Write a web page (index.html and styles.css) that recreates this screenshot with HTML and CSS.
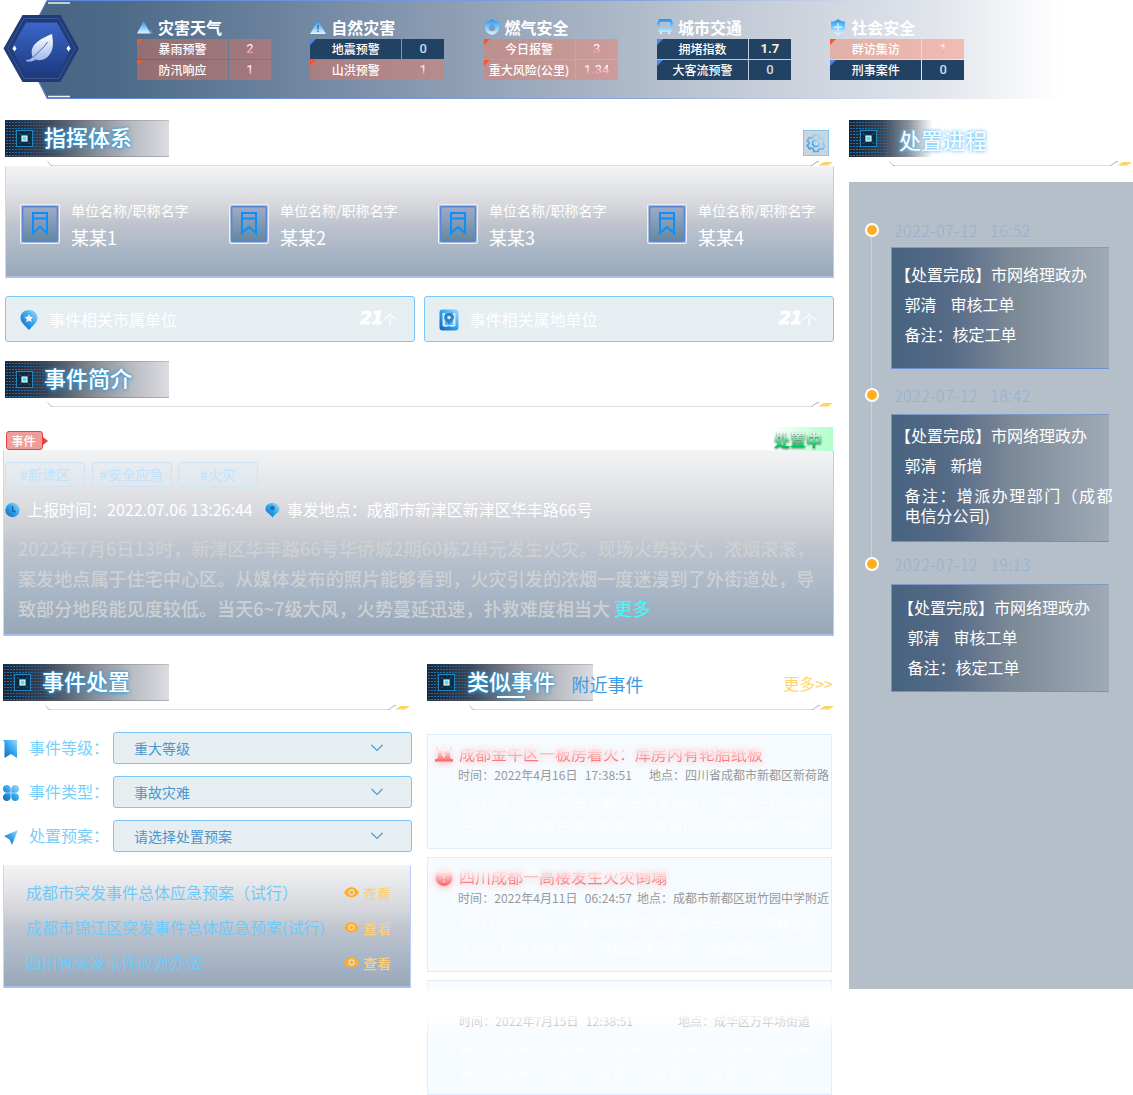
FILE: index.html
```html
<!DOCTYPE html>
<html lang="zh-CN">
<head>
<meta charset="utf-8">
<title>应急指挥</title>
<link rel="stylesheet" href="styles.css">
</head>
<body>
<svg class="defs" width="0" height="0" aria-hidden="true">
  <defs>
    <linearGradient id="gBlue" x1="0" y1="0" x2="0" y2="1"><stop offset="0" stop-color="#1796f5"/><stop offset="1" stop-color="#e4f4ff"/></linearGradient>
    <linearGradient id="gGlossy" x1="1" y1="0" x2="0" y2="1"><stop offset="0" stop-color="#a9dcfb"/><stop offset=".5" stop-color="#2fa4ee"/><stop offset="1" stop-color="#1560b4"/></linearGradient>
    <linearGradient id="gRed" x1="0" y1="0" x2="0" y2="1"><stop offset=".15" stop-color="#fff0f0"/><stop offset="1" stop-color="#f95f62"/></linearGradient>
    <symbol id="chip" viewBox="0 0 18 18">
      <rect x=".5" y=".5" width="16" height="16" fill="#0e2436" fill-opacity=".75" stroke="#1f86bd"/>
      <path d="M3 3l3 3M14 3l-3 3M3 14l3-3M14 14l-3-3" stroke="#27597c" fill="none"/>
      <rect x="5" y="5" width="7" height="7" fill="#1b3a50"/>
      <rect x="5.500" y="5.500" width="6" height="6" fill="#fff"/><rect x="6.500" y="6.500" width="4" height="4" fill="#3fe3f5"/>
    </symbol>
    <symbol id="ruleL" viewBox="0 0 6 5"><path d="M.5.5l3.500 4H6" fill="none" stroke="#b8b8b8"/></symbol>
    <symbol id="ruleR" viewBox="0 0 23 5"><path d="M0 4.500h1L6 .7h2" fill="none" stroke="#b0b0b0"/><path d="M12.500 1H22l-5 3.500H7.500z" fill="#fdd469"/></symbol>
    <symbol id="badge" viewBox="0 0 40 40">
      <defs><linearGradient id="gBadge" x1="0" y1="0" x2="0" y2="1"><stop offset="0" stop-color="#a0abc8"/><stop offset="1" stop-color="#6288a0"/></linearGradient></defs>
      <rect x=".5" y=".5" width="39" height="39" rx="1.500" fill="#aebbd6" stroke="#eef1f6"/>
      <rect x="2.700" y="2.700" width="34.600" height="34.600" rx="1" fill="url(#gBadge)" stroke="#5b85d6" stroke-width="1.400"/>
      <path d="M13 9v20l7-6 7 6V9zM13 14.500h14" fill="none" stroke="#0c8ff8" stroke-width="2"/>
    </symbol>
    <symbol id="eye" viewBox="0 0 15 11"><path d="M0 5.500C4-1.500 11-1.500 15 5.500 11 12 4 12 0 5.500z" fill="#ffae26"/><circle cx="7.500" cy="5.300" r="2.500" fill="none" stroke="#e3e4e7" stroke-width="1.200"/></symbol>
    <symbol id="chev" viewBox="0 0 14 8"><path d="M1.500 1L7 6.500 12.500 1" fill="none" stroke="#4a9ad3" stroke-width="1.200"/></symbol>
  </defs>
</svg>

<header class="banner">
  <svg class="banner-bg" width="1133" height="99" viewBox="0 0 1133 99">
    <defs>
      <linearGradient id="gBan" gradientUnits="userSpaceOnUse" x1="37" y1="0" x2="1062" y2="0"><stop offset="0" stop-color="#476583"/><stop offset=".08" stop-color="#4d6a88"/><stop offset=".33" stop-color="#7f92ab"/><stop offset=".5" stop-color="#9fadbf"/><stop offset=".7" stop-color="#c6cdd8"/><stop offset=".86" stop-color="#dee2e9"/><stop offset="1" stop-color="#fff"/></linearGradient>
      <linearGradient id="gBanLine" gradientUnits="userSpaceOnUse" x1="37" y1="0" x2="1040" y2="0"><stop offset="0" stop-color="#5b86da"/><stop offset=".6" stop-color="#86a3dc"/><stop offset="1" stop-color="#fff" stop-opacity="0"/></linearGradient>
      <linearGradient id="gHex" x1="0" y1="0" x2="0" y2="1"><stop offset="0" stop-color="#3b66c9"/><stop offset="1" stop-color="#1e3a80"/></linearGradient>
      <linearGradient id="gLeaf" x1="0" y1="0" x2="0" y2="1"><stop offset="0" stop-color="#fff"/><stop offset="1" stop-color="#9db4ea"/></linearGradient>
    </defs>
    <path d="M47 0H1062V99H47L22 49z" fill="url(#gBan)"/>
    <path d="M1040 .5H47L22 49l25.500 49.500H1040" fill="none" stroke="url(#gBanLine)"/>
    <path d="M48 3h22M48 96.500h22" stroke="#f3efec" stroke-width="1.600"/>
    <path d="M22.500 15h38L79 48.500 60.500 82h-38L3.500 48.500z" fill="#1f3c78"/>
    <path d="M24 18.500h34.500L75 48.500 58.500 78.500H24L7.500 48.500z" fill="none" stroke="#3b5590"/>
    <path d="M26 22.500h31L71.500 48.500 57 75H26L11.500 48.500z" fill="url(#gHex)"/>
    <path d="M14.500 45.500l2 3-2 3-2-3zM68.500 45.500l2 3-2 3-2-3z" fill="#fff"/>
    <path d="M52 34c1.500 9 1.500 15-2 20-3 5-9 7.500-14.500 5.500-2 1.800-4.500 2.300-9 2l-.5-1.500c3-.2 5.200-1 6.700-2.700C29.500 48 34 41 52 34z" fill="url(#gLeaf)"/>
    <path d="M33 57.500C38 52 44 48 47.500 42" fill="none" stroke="#4867b8"/>
  </svg>
  <div class="stats">
    <section class="stat">
      <h3><svg width="16" height="14" viewBox="0 0 16 14"><path d="M6.500 1l7 12.500H0z" fill="url(#gBlue)"/><path d="M12.500 8.500l3.300 5h-1.500z" fill="#52b4fa"/></svg>灾害天气</h3>
      <div class="row hot"><span>暴雨预警</span><b>2</b></div>
      <div class="row hot"><span>防汛响应</span><b>1</b></div>
    </section>
    <section class="stat">
      <h3><svg width="16" height="14" viewBox="0 0 16 14"><path d="M8 .5L16 14H0z" fill="url(#gBlue)"/><path d="M8 5v4.500M8 10.500v1.500" stroke="#35688f" stroke-width="1.300"/></svg>自然灾害</h3>
      <div class="row"><span>地震预警</span><b>0</b></div>
      <div class="row hot"><span>山洪预警</span><b>1</b></div>
    </section>
    <section class="stat">
      <h3><svg width="16" height="16" viewBox="0 0 16 16"><path d="M8 0c2 2 5 2.500 7 2.500V9c0 4-4 6-7 7-3-1-7-3-7-7V2.500C4 2.500 6 2 8 0z" fill="url(#gBlue)"/><path d="M8 4c3 3 4 4.500 3 6.500-1.500 2-4.500 2-6 0C4 8.500 5.500 8 8 4z" fill="#7b9dbd"/></svg>燃气安全</h3>
      <div class="row hot"><span>今日报警</span><b>3</b></div>
      <div class="row hot"><span>重大风险(公里)</span><b>1.34</b></div>
    </section>
    <section class="stat">
      <h3><svg width="16" height="15" viewBox="0 0 16 15"><path fill-rule="evenodd" d="M3 0h10q2 0 2 3h1v4h-1.500v6H13v2h-2v-2H5v2H3v-2H1.500V7H0V3h1q0-3 2-3zm0 3v5h10V3z" fill="url(#gBlue)"/></svg>城市交通</h3>
      <div class="row"><span>拥堵指数</span><b class="gold">1.7</b></div>
      <div class="row"><span>大客流预警</span><b>0</b></div>
    </section>
    <section class="stat">
      <h3><svg width="16" height="16" viewBox="0 0 16 16"><path d="M8 0c2 2 5 2.500 7 2.500V9c0 4-4 6-7 7-3-1-7-3-7-7V2.500C4 2.500 6 2 8 0z" fill="url(#gBlue)"/><path d="M8 4v8M4 8h8" stroke="#d9efff" stroke-width="1.500"/></svg>社会安全</h3>
      <div class="row hot"><span>群访集访</span><b>1</b></div>
      <div class="row"><span>刑事案件</span><b>0</b></div>
    </section>
  </div>
</header>

<div class="page">
<main class="main">
  <section class="block command">
    <div class="head"><div class="plate"><svg width="18" height="18"><use href="#chip"/></svg><h2>指挥体系</h2></div>
      <button class="gear"><svg width="20" height="20" viewBox="0 0 20 20"><defs><linearGradient id="gGear" x1="0" y1="1" x2="1" y2="0"><stop offset="0" stop-color="#1b98ee"/><stop offset="1" stop-color="#b9e1fa"/></linearGradient></defs><path d="M8 2h4l.6 2.400 1.700 1 2.400-.7 2 3.400-1.700 1.700v1.400l1.700 1.700-2 3.400-2.400-.7-1.700 1L12 18.500H8l-.6-2.400-1.700-1-2.400.7-2-3.400L3 10.800V9.400L1.300 7.800l2-3.400 2.400.7 1.700-1z" fill="none" stroke="url(#gGear)" stroke-width="1.700" stroke-linejoin="round"/><circle cx="10" cy="10.200" r="3.300" fill="none" stroke="url(#gGear)" stroke-width="1.500"/></svg></button></div>
    <div class="rule"><svg width="6" height="5"><use href="#ruleL"/></svg><i></i><svg width="23" height="5"><use href="#ruleR"/></svg></div>
    <div class="panel members">
      <div class="member"><svg width="40" height="40"><use href="#badge"/></svg><div><p>单位名称/职称名字</p><strong>某某1</strong></div></div>
      <div class="member"><svg width="40" height="40"><use href="#badge"/></svg><div><p>单位名称/职称名字</p><strong>某某2</strong></div></div>
      <div class="member"><svg width="40" height="40"><use href="#badge"/></svg><div><p>单位名称/职称名字</p><strong>某某3</strong></div></div>
      <div class="member"><svg width="40" height="40"><use href="#badge"/></svg><div><p>单位名称/职称名字</p><strong>某某4</strong></div></div>
    </div>
  </section>

  <div class="units">
    <div class="unit"><svg width="18" height="22" viewBox="0 0 18 22"><path d="M9 1c5 0 8.500 3.500 8.500 8S13 16.500 9 21C5 16.500.5 13.500.5 9S4 1 9 1z" fill="url(#gGlossy)"/><path d="M9 4l1.500 3.300 3.800.4-2.800 2.500.8 3.600L9 12l-3.300 1.800.8-3.600-2.800-2.500 3.800-.4z" fill="#e9f4fc" stroke="#2879bd" stroke-width=".5"/></svg><span>事件相关市属单位</span><em>21</em><small>个</small></div>
    <div class="unit"><svg width="20" height="22" viewBox="0 0 20 22"><rect x=".5" y=".5" width="19" height="21" rx="3" fill="url(#gGlossy)"/><path d="M3.500 4h13v13l-3.500 1-3-1-3 1-3.500-1z" fill="#d3e8f7"/><path d="M6 3h8v13H6z" fill="#62b4ea"/><path d="M10 4c3 0 5 2 5 4.500S12 13 10 15.500C8 13 5 11 5 8.500S7 4 10 4z" fill="#2a86cc"/><circle cx="10" cy="8.500" r="1.700" fill="#dceefa"/></svg><span>事件相关属地单位</span><em>21</em><small>个</small></div>
  </div>

  <section class="block intro">
    <div class="head"><div class="plate"><svg width="18" height="18"><use href="#chip"/></svg><h2>事件简介</h2></div></div>
    <div class="rule"><svg width="6" height="5"><use href="#ruleL"/></svg><i></i><svg width="23" height="5"><use href="#ruleR"/></svg></div>
    <div class="flags">
      <div class="flag-event"><span>事件</span><svg width="6" height="8" viewBox="0 0 6 8"><path d="M0 0l5 4-5 4z" fill="#e5443f"/></svg></div>
      <div class="flag-state"><span>处置中</span></div>
    </div>
    <div class="panel event">
      <div class="tags"><span>#新津区</span><span>#安全应急</span><span>#火灾</span></div>
      <div class="facts">
        <svg width="15" height="16" viewBox="0 0 15 16"><circle cx="7.500" cy="8" r="7.200" fill="url(#gGlossy)"/><path d="M7.500 4v4.500l3 1.500" fill="none" stroke="#1c5fa5" stroke-width="1.400"/></svg>
        <span class="when">上报时间：2022.07.06 13:26:44</span>
        <svg width="15" height="16" viewBox="0 0 15 16"><path d="M7.500 1C11.500 1 14.500 3.500 14.500 7S10 11.500 7.500 15.500C5 11.500.5 10.500.5 7S3.500 1 7.500 1z" fill="url(#gGlossy)"/><circle cx="7.500" cy="6" r="2.300" fill="#1e6fba"/></svg>
        <span>事发地点：成都市新津区新津区华丰路66号</span>
      </div>
      <p class="story">2022年7月6日13时，新津区华丰路66号华侨城2期60栋2单元发生火灾。现场火势较大，浓烟滚滚，<br>案发地点属于住宅中心区。从媒体发布的照片能够看到，火灾引发的浓烟一度迷漫到了外街道处，导<br>致部分地段能见度较低。当天6~7级大风，火势蔓延迅速，扑救难度相当大 <a>更多</a></p>
    </div>
  </section>

  <div class="split">
    <section class="block handle">
      <div class="head"><div class="plate"><svg width="18" height="18"><use href="#chip"/></svg><h2>事件处置</h2></div></div>
      <div class="rule"><svg width="6" height="5"><use href="#ruleL"/></svg><i></i><svg width="23" height="5"><use href="#ruleR"/></svg></div>
      <div class="form">
        <div class="field"><svg width="16" height="20" viewBox="0 0 16 20"><path d="M0 1h15l-1 1v17l-6-4-6.500 4V3z" fill="url(#gGlossy)"/></svg><label>事件等级：</label><div class="select"><span>重大等级</span><svg width="14" height="8"><use href="#chev"/></svg></div></div>
        <div class="field"><svg width="16" height="20" viewBox="0 0 16 20"><g fill="url(#gGlossy)"><path d="M7.700 9.700H4A3.900 3.900 0 1 1 7.700 6zM8.300 9.700H12A3.900 3.900 0 1 0 8.300 6zM7.700 10.300H4A3.900 3.900 0 1 0 7.700 14zM8.300 10.300H12A3.900 3.900 0 1 1 8.300 14z"/></g></svg><label>事件类型：</label><div class="select"><span>事故灾难</span><svg width="14" height="8"><use href="#chev"/></svg></div></div>
        <div class="field"><svg width="16" height="20" viewBox="0 0 16 20"><path d="M15 3L9 18l-2.500-5.500L1 9z" fill="url(#gGlossy)"/></svg><label>处置预案：</label><div class="select"><span>请选择处置预案</span><svg width="14" height="8"><use href="#chev"/></svg></div></div>
      </div>
      <ul class="panel plans">
        <li><span>成都市突发事件总体应急预案（试行）</span><svg width="15" height="11"><use href="#eye"/></svg><a>查看</a></li>
        <li><span>成都市锦江区突发事件总体应急预案(试行)</span><svg width="15" height="11"><use href="#eye"/></svg><a>查看</a></li>
        <li><span>四川省突发事件应对办法</span><svg width="15" height="11"><use href="#eye"/></svg><a>查看</a></li>
      </ul>
    </section>

    <section class="block similar">
      <div class="head"><div class="plate"><svg width="18" height="18"><use href="#chip"/></svg><h2 class="active">类似事件</h2></div><span class="tab">附近事件</span><a class="more">更多&gt;&gt;</a></div>
      <div class="rule"><svg width="6" height="5"><use href="#ruleL"/></svg><i></i><svg width="23" height="5"><use href="#ruleR"/></svg></div>
      <div class="cards">
        <article class="card">
          <h4><svg width="18" height="16" viewBox="0 0 18 16"><path d="M3 12V8a6 6 0 0 1 12 0v4h1v1h2v2.500H0V13h2v-1z" fill="url(#gRed)"/><path d="M1 2l2 1.500M17 2l-2 1.500" stroke="#fbb"/><path d="M9.500 5L7 9h3l-1.500 3" fill="none" stroke="#fff"/></svg><span>成都金牛区一板房着火：库房内有轮胎纸板</span></h4>
          <div class="meta"><span class="at">时间：2022年4月16日&nbsp; 17:38:51</span><span>地点：四川省成都市新都区新荷路</span></div>
          <p>4月16日下午5点左右，据多名网友爆料，成都北三环附近发<br>生火灾。从网友拍摄的视频可以看到现场火势很大，浓烟...</p>
        </article>
        <article class="card">
          <h4><svg width="18" height="18" viewBox="0 0 18 18"><circle cx="9" cy="9.500" r="8.500" fill="url(#gRed)"/><path d="M9 5v6M9 12.500v2" stroke="#ffd3d3" stroke-width="1.700"/></svg><span>四川成都一高楼发生火灾倒塌</span></h4>
          <div class="meta"><span class="at">时间：2022年4月11日&nbsp; 06:24:57</span><span>地点：成都市新都区斑竹园中学附近</span></div>
          <p>4月11日06时许，成都市新都区斑竹园中学附近一高楼发生<br>火灾，现场火势猛烈，黑烟直冲云霄。现场画面显示，一...</p>
        </article>
        <article class="card faded">
          <h4></h4>
          <div class="meta"><span class="at">时间：2022年7月15日&nbsp; 12:38:51</span><span>地点：成华区万年场街道</span></div>
          <p>事件内容事件内容事件内容事件内容事件内容事件内容事<br>事件内容事件内容件内容事件内容事件内容事件内容...</p>
        </article>
      </div>
    </section>
  </div>
</main>

<aside class="side">
  <div class="head"><div class="plate fade"><svg width="18" height="18"><use href="#chip"/></svg><h2>处置进程</h2></div></div>
  <div class="rule"><svg width="6" height="5"><use href="#ruleL"/></svg><i></i><svg width="23" height="5"><use href="#ruleR"/></svg></div>
  <ol class="timeline">
    <li class="step s1"><div class="track"><b></b><i></i></div><div class="info"><time><span>2022-07-12</span><span>16:52</span></time>
      <div class="note"><p class="st">【处置完成】市网络理政办</p><p><span class="who">郭清</span>审核工单</p><p>备注：核定工单</p></div></div></li>
    <li class="step s2"><div class="track"><b></b><i></i></div><div class="info"><time><span>2022-07-12</span><span>18:42</span></time>
      <div class="note"><p class="st">【处置完成】市网络理政办</p><p><span class="who">郭清</span>新增</p><p class="wide">备注：增派办理部门（成都</p><p class="tight">电信分公司)</p></div></div></li>
    <li class="step s3"><div class="track"><b></b></div><div class="info"><time><span>2022-07-12</span><span>19:13</span></time>
      <div class="note"><p class="st">【处置完成】市网络理政办</p><p><span class="who">郭清</span>审核工单</p><p>备注：核定工单</p></div></div></li>
  </ol>
</aside>
</div>
</body>
</html>
```
FILE: styles.css
```css
* { box-sizing: border-box; margin: 0; padding: 0; }
body { width: 1133px; height: 1095px; overflow: hidden; background: #fff; color: #fff; font-family: "Noto Sans CJK SC", "Noto Sans", sans-serif; font-size: 16px; white-space: nowrap; }
ul, ol { list-style: none; }
svg { display: block; flex: none; }
.defs { position: absolute; }

/* banner */
.banner { display: grid; height: 99px; }
.banner > * { grid-area: 1 / 1; }
.stats { display: flex; padding: 15px 0 0 137px; gap: 39.300px; }
.stat { width: 134px; }
.stat h3 { display: flex; align-items: center; gap: 5px; height: 24px; font-size: 16px; font-weight: 700; line-height: 24px; }
.stat h3 svg { margin-top: -1px; }
.row { display: flex; gap: 1px; height: 20px; margin-bottom: 1px; font-size: 12px; line-height: 19px; text-align: center; }
.row span { width: 91px; background: linear-gradient(135deg, #4b84ee 4px, transparent 4.500px), #224263; font-weight: 500; }
.row b { width: 42px; background: #224263; color: #c9dcf2; font-family: Roboto, sans-serif; font-size: 13px; line-height: 20px; font-weight: 500; }
.row.hot span { background: linear-gradient(135deg, #fb5527 4px, transparent 4.500px), rgba(255, 112, 80, .38); }
.row.hot b { background: linear-gradient(#fff 25%, #ff6b7e 85%), linear-gradient(rgba(255, 112, 80, .38), rgba(255, 112, 80, .38)); -webkit-background-clip: text, border-box; background-clip: text, border-box; color: transparent; }
.row b.gold { color: #fff6cf; font-weight: 700; }

/* shared */
.page { display: flex; gap: 15px; padding-top: 21px; }
.main { width: 834px; }
.head { display: flex; height: 37px; }
.plate { position: relative; display: flex; align-items: center; width: 164px; height: 37px; padding-left: 11px; background: linear-gradient(90deg, #172334 0, #3b4252 25%, #8c9098 56%, #b9bcc3 78%, #dcdde1 100%); box-shadow: inset 0 -1px rgba(90, 96, 108, .35), inset 0 1px rgba(90, 96, 108, .25); }
.plate::before { content: ""; position: absolute; inset: 1px 90px 1px 0; background: conic-gradient(from 270deg at 2px 1px, #1b86cf 90deg, transparent 0) 1px 1px / 3px 3px; opacity: .8; -webkit-mask: linear-gradient(90deg, #000 15%, transparent); mask: linear-gradient(90deg, #000 15%, transparent); }
.plate > * { position: relative; }
.plate h2 { margin: -5px 0 0 10px; font-size: 22px; line-height: 34px; font-weight: 500; text-shadow: 0 0 3px #2b9de0, 0 1px 4px #2b9de0; }
.rule { display: flex; height: 5px; margin: 4px 0 0 42px; }
.rule i { flex: 1; height: 5px; border-bottom: 1px solid #e0e0e0; }
.panel { background: linear-gradient(180deg, #f2f3f4 0, #dfe0e4 25%, #cdd0d6 42%, #bfc4cd 52%, #b3bdca 65%, #a5b3c3 82%, #98a8b9 100%); border: 1px solid; border-color: #f4f5f6 #b9cdf2 #a9c2ec #c9d8f5; border-bottom-width: 2px; }

/* command */
.command, .intro { padding-left: 5px; }
.command .head { justify-content: space-between; padding-right: 5px; }
.gear { display: flex; width: 26px; height: 26px; margin-top: 10px; padding: 2px; background: #cfd3da; border: 1px solid #80c8f8; }
.members { display: flex; gap: 9px; height: 112px; padding: 37px 0 0 14px; }
.member { display: flex; flex: none; gap: 11px; width: 200px; }
.member:last-child { width: 170px; }
.member p { margin-top: -4px; font-size: 14px; line-height: 20px; }
.member strong { display: block; margin-top: 4px; font-size: 18px; line-height: 26px; font-weight: 400; }
.units { display: flex; gap: 9px; margin: 18px 0 19px 5px; }
.unit { display: flex; align-items: center; width: 410px; height: 46px; padding: 0 17px 0 14px; background: #e6eef2; border: 1px solid #7cc5fd; border-radius: 3px; }
.unit svg { margin-top: 2px; }
.unit span { flex: 1; margin-left: 11px; }
.unit + .unit span { margin-left: 10.500px; }
.unit em { font: italic 700 17px/20px "DejaVu Sans", sans-serif; letter-spacing: -.3px; margin-top: -2px; -webkit-text-stroke: .8px #fff; }
.unit small { font-size: 14px; }

/* event intro */
.flags { display: flex; justify-content: space-between; height: 43px; padding: 20px 1px 0 1px; }
.flag-event { display: flex; align-items: center; height: 19px; margin-top: 4px; }
.flag-event span { width: 37px; height: 19px; padding-right: 2px; border: 1px solid #e2443e; border-radius: 3px; background: #f19c99; font-size: 12px; line-height: 17px; text-align: center; font-weight: 500; }
.flag-state { width: 62px; height: 24px; padding-left: 3px; background: linear-gradient(90deg, #fff, #aeffca); }
.flag-state span { font-size: 16px; font-weight: 700; line-height: 24px; background: linear-gradient(#fff 20%, #00c45c 80%); -webkit-background-clip: text; background-clip: text; color: transparent; filter: drop-shadow(0 1px 1px #3a664d); }
.event { height: 186px; margin: 0 0 28px -2px; padding-top: 11px; }
.tags { display: flex; gap: 6.500px; padding-left: 1px; }
.tags span { width: 80px; height: 25px; border: 1px solid #d0e3f3; border-radius: 3px; background: rgba(220, 235, 245, .35); color: #c0e2fb; font-size: 14px; line-height: 22px; text-align: center; }
.facts { display: flex; align-items: center; height: 24px; margin: 11px 0 0 1px; }
.facts span { margin: -2px 0 0 7px; line-height: 24px; }
.facts .when { margin-right: 12px; }
.story { margin: 11px 0 0 14px; font-size: 18px; line-height: 30px; letter-spacing: .1px; font-weight: 500; color: #ced0d3; }
.story a { color: #3ffcff; font-weight: 400; }

/* handling form */
.split { display: flex; }
.handle { width: 424px; padding-left: 3px; }
.handle .rule { width: 366px; }
.handle .plate, .similar .plate { width: 165.500px; }
.form { display: grid; gap: 12px; margin-top: 22px; }
.field { display: flex; align-items: center; height: 32px; }
.field > svg { margin-top: 2px; }
.field label { width: 84px; margin: -2px 0 0 10px; color: #79cffa; }
.select { display: flex; align-items: center; justify-content: space-between; width: 299px; height: 32px; padding: 0 27px 0 20px; border: 1px solid #7cc5fd; border-radius: 3px; background: #e6eef2; color: #4b96ce; font-size: 14px; }
.select span { margin-top: -1px; }
.plans { width: 408px; height: 123px; margin-top: 13px; padding: 9px 19px 0 22px; }
.plans li { display: flex; align-items: center; height: 35px; color: #6fcafb; }
.plans li span { flex: 1; margin-top: -1px; }
.plans a { margin-left: 4px; color: #fbd07a; font-size: 14px; font-weight: 500; }

/* similar events */
.similar { width: 410px; padding-left: 3px; }
.similar .rule { width: 366px; }
.similar .plate h2 { margin-left: 11px; }
.active::after { content: ""; position: absolute; left: 30px; top: 33px; width: 28px; height: 2px; background: #fff; box-shadow: 0 0 4px #2b9de0; }
.tab { margin: 8px 0 0 -21px; color: #3b9be6; font-size: 18px; line-height: 24px; z-index: 1; }
.more { margin: 8px 0 0 auto; padding-right: 1px; color: #ffd46b; line-height: 22px; }
.cards { display: grid; gap: 8px; width: 405px; margin-top: 24px; }
.card { position: relative; height: 115px; padding: 7px 0 0 7px; background: #f6fbff; border: 1px solid #dceefd; }
.card h4 { display: flex; align-items: center; gap: 6px; height: 23px; font-size: 16px; font-weight: 400; filter: drop-shadow(0 2px 3px rgba(255, 80, 80, .35)); }
.card h4 span { margin-top: -1px; line-height: 22px; background: linear-gradient(#fff 20%, #fb6c6e 90%); -webkit-background-clip: text; background-clip: text; color: transparent; }
.meta { display: flex; justify-content: space-between; height: 20px; padding: 0 2px 0 23px; color: #999; font-size: 12px; line-height: 20px; }
.at { letter-spacing: .08px; word-spacing: .8px; }
.card p { margin: 4px 0 0 23px; color: #fcfeff; font-size: 14px; line-height: 24px; }
.faded .meta { padding: 0 21px 0 24px; }
.faded::after { content: ""; position: absolute; inset: 0 -1px auto -1px; height: 55px; background: linear-gradient(rgba(255, 255, 255, 0), #fff 14px 32px, rgba(255, 255, 255, 0)); }

/* timeline */
.side { width: 284px; }
.side .plate { background: linear-gradient(90deg, #172334 0, #3b4252 20%, #8c9098 36%, #fff 51%); box-shadow: none; }
.side .plate h2 { margin: 0 0 0 21px; font-weight: 400; text-shadow: 0 0 3px #6cc4f7, 0 0 4px #6cc4f7; }
.side .rule { margin: 4px 0 0 40px; }
.timeline { height: 807px; margin-top: 16px; padding: 41px 0 0 15px; background: #b5bfca; }
.step { display: flex; gap: 12px; }
.s1 { height: 165px; } .s2 { height: 169px; }
.track { display: flex; flex-direction: column; align-items: center; width: 15px; }
.track b { flex: none; width: 14px; height: 14px; border: 2px solid #fff; border-radius: 50%; background: #ffae21; }
.track i { flex: 1; width: 1px; background: #cad1d9; }
time { display: flex; gap: 12px; height: 16px; padding-left: 3px; margin-top: -1px; color: #95b0d2; font-weight: 300; line-height: 16px; letter-spacing: .5px; }
.note { width: 218px; height: 122px; margin-top: 9px; padding: 11px 0 0 12.500px; border: 1px solid; border-color: #7f99c6 #9eacba #6c91d2 #6d93db; background: linear-gradient(90deg, #476380, #566b86 27%, #6e7d92 45%, #7b8997 55%, #9faab6); line-height: 30px; }
.note p { height: 30px; }
.note .st { margin-left: -9.500px; }
.who { margin-right: 14px; }
.s2 .note { height: 128px; margin-top: 11px; padding-top: 5px; }
.note .wide { width: 208px; height: 20px; margin-top: 5px; line-height: 20px; text-align-last: justify; text-justify: inter-character; }
.note .tight { height: 20px; line-height: 20px; }
.s3 .note { height: 108px; margin-top: 12px; padding: 7px 0 0 15.500px; }
```
